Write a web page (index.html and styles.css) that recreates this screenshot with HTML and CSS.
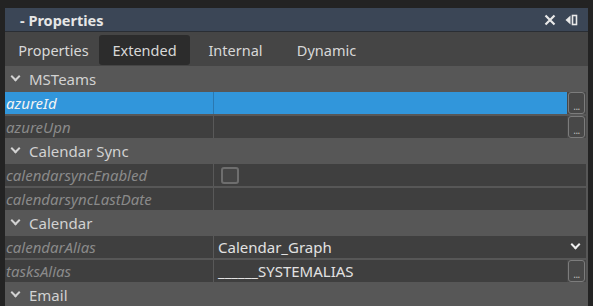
FILE: index.html
```html
<!DOCTYPE html>
<html lang="en">
<head>
    <meta charset="UTF-8">
    <title>Properties</title>
    <link rel="stylesheet" href="styles.css">
</head>
<body>
    <div class="panel">
        <div class="titlebar">
            <span class="title">- Properties</span>
            <div class="title-icons">
                <svg width="12" height="12" viewBox="0 0 12 12"><path d="M1.5 1.5 L10.5 10.5 M10.5 1.5 L1.5 10.5" stroke="#e8e8e8" stroke-width="2.2"/></svg>
                <svg width="13" height="12" viewBox="0 0 13 12"><path d="M0.5 6 L5.5 1.5 L5.5 10.5 Z" fill="#e8e8e8"/><rect x="7.5" y="1.5" width="4" height="9" fill="none" stroke="#e8e8e8" stroke-width="1.6"/></svg>
            </div>
        </div>

        <div class="tabs">
            <div class="tab">Properties</div>
            <div class="tab active">Extended</div>
            <div class="tab">Internal</div>
            <div class="tab">Dynamic</div>
        </div>

        <div class="grid">
            <div class="group"><span class="chevron"></span>MSTeams</div>
            <div class="row selected">
                <div class="label">azureId</div>
                <div class="value"><span class="text"></span><span class="more">...</span></div>
            </div>
            <div class="row">
                <div class="label">azureUpn</div>
                <div class="value"><span class="text"></span><span class="more">...</span></div>
            </div>

            <div class="group"><span class="chevron"></span>Calendar Sync</div>
            <div class="row">
                <div class="label">calendarsyncEnabled</div>
                <div class="value"><span class="text"><span class="checkbox"></span></span></div>
            </div>
            <div class="row">
                <div class="label">calendarsyncLastDate</div>
                <div class="value"><span class="text"></span></div>
            </div>

            <div class="group"><span class="chevron"></span>Calendar</div>
            <div class="row">
                <div class="label">calendarAlias</div>
                <div class="value"><span class="text">Calendar_Graph</span><span class="dropdown"></span></div>
            </div>
            <div class="row">
                <div class="label">tasksAlias</div>
                <div class="value"><span class="text">______SYSTEMALIAS</span><span class="more">...</span></div>
            </div>

            <div class="group"><span class="chevron"></span>Email</div>
        </div>
    </div>
</body>
</html>
```

FILE: styles.css
```css
body {
    margin: 0;
    padding: 8px 5px 0 5px;
    background-color: #232323;
    font-family: 'Noto Sans', 'Open Sans', sans-serif;
    font-size: 15px;
    height: 306px;
    box-sizing: border-box;
    overflow: hidden;
}
.panel {
    width: 583px;
    background-color: #575757;
}
.titlebar {
    height: 23px;
    background-color: #3b4656;
    border-bottom: 1px solid #2a2e34;
    display: flex;
    align-items: center;
    justify-content: space-between;
    padding: 0 10px 0 15px;
}
.title {
    color: #e6e6e6;
    font-weight: bold;
    font-size: 14.5px;
}
.title-icons {
    display: flex;
    align-items: center;
    gap: 9px;
}
.tabs {
    height: 34px;
    background-color: #454545;
    display: flex;
    align-items: flex-start;
    padding: 3px 0 0 3px;
    box-sizing: border-box;
}
.tab {
    width: 91px;
    height: 30px;
    line-height: 30px;
    text-align: center;
    color: #d8d8d8;
    font-size: 14.5px;
    border-radius: 3px;
}
.tab.active {
    background-color: #2c2c2c;
}
.grid {
    display: flex;
    flex-direction: column;
    gap: 2px;
    padding: 2px 2px 0 0;
}
.group {
    height: 22px;
    display: flex;
    align-items: center;
    color: #d2d2d2;
}
.chevron {
    width: 24px;
    height: 22px;
    position: relative;
}
.chevron::before {
    content: '';
    position: absolute;
    left: 7px;
    top: 5px;
    width: 5px;
    height: 5px;
    border-right: 2px solid #d2d2d2;
    border-bottom: 2px solid #d2d2d2;
    transform: rotate(45deg);
}
.row {
    height: 22px;
    display: grid;
    grid-template-columns: 208px 1fr;
    column-gap: 1px;
    background-color: #595959;
}
.label {
    background-color: #3f3f3f;
    color: #8a8a8a;
    font-style: italic;
    padding-left: 1px;
    line-height: 22px;
    white-space: nowrap;
    overflow: hidden;
}
.value {
    display: flex;
    background-color: #474747;
}
.text {
    flex: 1;
    background-color: #3f3f3f;
    color: #e2e2e2;
    padding-left: 4px;
    line-height: 22px;
    display: flex;
    align-items: center;
}
.row.selected {
    background-color: #2b78b0;
}
.row.selected .label,
.row.selected .text {
    background-color: #3196db;
    color: #f4f4f4;
}
.more {
    width: 15px;
    height: 20px;
    margin: 0 1px 0 1px;
    border: 1px solid #7c7c7c;
    border-radius: 3px;
    background-color: #484848;
    color: #bdbdbd;
    font-size: 10px;
    line-height: 26px;
    text-align: center;
    letter-spacing: -0.5px;
}
.dropdown {
    width: 19px;
    background-color: #3f3f3f;
    position: relative;
}
.dropdown::before {
    content: '';
    position: absolute;
    left: 5px;
    top: 5px;
    width: 5px;
    height: 5px;
    border-right: 2px solid #f0f0f0;
    border-bottom: 2px solid #f0f0f0;
    transform: rotate(45deg);
}
.checkbox {
    width: 14px;
    height: 13px;
    margin-left: 3px;
    border: 2px solid #6e6e6e;
    border-radius: 3px;
    background-color: #454545;
}
```
